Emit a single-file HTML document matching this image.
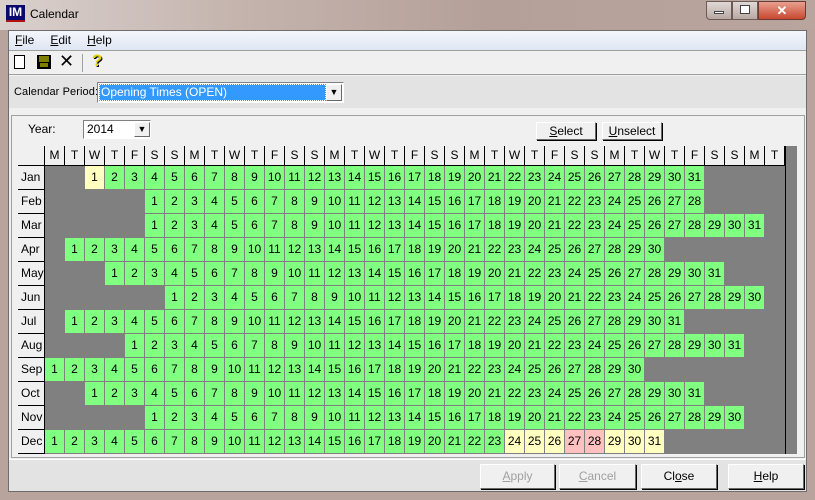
<!DOCTYPE html>
<html><head><meta charset="utf-8"><style>
*{box-sizing:border-box;margin:0;padding:0}
body{width:815px;height:500px;overflow:hidden;font-family:"Liberation Sans",sans-serif;font-size:12px;color:#000;background:#b8a49c;position:relative}
.abs{position:absolute}
.title{left:0;top:0;width:815px;height:30px;background:linear-gradient(90deg,#d9d0cd 0%,#c4b3ad 30%,#b4a098 60%,#b9a59e 100%)}
.client{left:8px;top:30px;width:799px;height:462px;background:#f0f0f0;border:1px solid #6d6d6d}
.menu{left:9px;top:31px;width:797px;height:19px;background:linear-gradient(#f4f6fb,#dfe6f3)}
.menu span{margin-left:6px;margin-right:10px;font-size:12px;line-height:19px}
.tool{left:9px;top:50px;width:797px;height:25px;background:#f0f0f0;border-top:1px solid #a0a0a0;border-bottom:1px solid #a0a0a0}
.period{left:9px;top:76px;width:797px;height:32px;background:#e3e3e3}
.panel{left:11px;top:115px;width:794px;height:343px;background:#f0f0f0;border:1px solid #a0a0a0}
.bottom{left:9px;top:459px;width:797px;height:32px;background:#e3e3e3;border-top:1px solid #fff}
.btn{position:absolute;background:#f0f0f0;border:1px solid;border-color:#fff #696969 #696969 #fff;box-shadow:1px 1px 0 #000;text-align:center;font-size:12px}
.grid{left:18px;top:146px;width:779px;height:308px;background:#808080}
.row{position:absolute;left:0;display:flex;height:24px}
.lab{width:27px;height:24px;background:#f0f0f0;border-right:1px solid #000;border-bottom:1px solid #000;padding-left:3px;line-height:23px}
.row b{display:block;width:19px;height:23px;margin-right:1px;background:#80ff80;text-align:center;line-height:23px;font-weight:normal}
.row b.y{background:#ffffc0}.row b.p{background:#ffc0c0}
.hdr{position:absolute;left:0;top:0;display:flex;height:20px}
.hdr i{display:block;width:20px;height:20px;background:#f0f0f0;border-right:1px solid #000;border-bottom:1px solid #000;font-style:normal;text-align:center;line-height:19px}
.hdr i.f{width:27px}
u{text-decoration:underline}
</style></head><body>
<div class="abs title"></div>
<div class="abs" style="left:6px;top:5px;width:19px;height:17px;background:#0a0a6e;border-bottom:2px solid #b01010;color:#fff;font-weight:bold;font-size:12px;line-height:15px;text-align:center">IM</div>
<div class="abs" style="left:30px;top:7px;font-size:12px">Calendar</div>
<div class="abs" style="left:706px;top:1px;width:26px;height:19px;border:1px solid #6b5a55;border-radius:0 0 0 4px;background:linear-gradient(#e0d8d5,#b8a8a3)"></div>
<div class="abs" style="left:732px;top:1px;width:26px;height:19px;border:1px solid #6b5a55;background:linear-gradient(#e0d8d5,#b8a8a3)"></div>
<div class="abs" style="left:758px;top:1px;width:48px;height:19px;border:1px solid #6b3a30;border-radius:0 0 4px 0;background:linear-gradient(#e8a090,#c84830);color:#fff;font-weight:bold;text-align:center;line-height:17px;font-size:13px">✕</div>
<div class="abs" style="left:714px;top:11px;width:10px;height:3px;background:#fff;border:1px solid #444"></div>
<div class="abs" style="left:740px;top:5px;width:10px;height:9px;border:1px solid #444;background:#fff"></div>
<div class="abs client"></div>
<div class="abs menu"><span><u>F</u>ile</span><span><u>E</u>dit</span><span><u>H</u>elp</span></div>
<div class="abs tool"></div>
<div class="abs" style="left:14px;top:55px;width:11px;height:14px;border:1px solid #000;background:#fff"></div>
<div class="abs" style="left:37px;top:55px;width:14px;height:14px;background:#000"><div style="margin:1px 2px;width:10px;height:6px;background:#808000"></div><div style="margin:1px 3px;width:8px;height:4px;background:#808000"></div></div>
<div class="abs" style="left:59px;top:51px;font-size:18px;line-height:20px">✕</div>
<div class="abs" style="left:82px;top:54px;width:1px;height:18px;background:#a0a0a0"></div>
<div class="abs" style="left:92px;top:51px;font-size:17px;font-weight:bold;color:#e0d000;text-shadow:1px 1px 0 #000">?</div>
<div class="abs period"></div>
<div class="abs" style="left:14px;top:86px;font-size:11px;letter-spacing:0.1px">Calendar Period:</div>
<div class="abs" style="left:97px;top:82px;width:247px;height:21px;background:#fff;border:1px solid;border-color:#808080 #fff #fff #808080"></div>
<div class="abs" style="left:100px;top:85px;width:225px;height:15px;background:#3399ff;color:#fff;line-height:15px;padding-left:1px;outline:1px dotted #c08000">Opening Times (OPEN)</div>
<div class="abs btn" style="left:326px;top:84px;width:16px;height:17px;box-shadow:none;font-size:9px;line-height:15px">▼</div>
<div class="abs panel"></div>
<div class="abs" style="left:28px;top:122px">Year:</div>
<div class="abs" style="left:83px;top:120px;width:68px;height:19px;background:#fff;border:1px solid;border-color:#808080 #fff #fff #808080;padding-left:3px;line-height:17px">2014</div>
<div class="abs btn" style="left:134px;top:122px;width:16px;height:15px;box-shadow:none;font-size:9px;line-height:13px">▼</div>
<div class="abs btn" style="left:536px;top:122px;width:60px;height:18px;line-height:16px"><u>S</u>elect</div>
<div class="abs btn" style="left:602px;top:122px;width:60px;height:18px;line-height:16px"><u>U</u>nselect</div>
<div class="abs grid">
<div class="hdr"><i class="f"></i><i>M</i><i>T</i><i>W</i><i>T</i><i>F</i><i>S</i><i>S</i><i>M</i><i>T</i><i>W</i><i>T</i><i>F</i><i>S</i><i>S</i><i>M</i><i>T</i><i>W</i><i>T</i><i>F</i><i>S</i><i>S</i><i>M</i><i>T</i><i>W</i><i>T</i><i>F</i><i>S</i><i>S</i><i>M</i><i>T</i><i>W</i><i>T</i><i>F</i><i>S</i><i>S</i><i>M</i><i>T</i></div>
<div class="abs" style="left:767px;top:0;width:1px;height:308px;background:#000"></div>
<div class="row" style="top:20px"><div class="lab">Jan</div><div style="width:40px"></div><b class="y">1</b><b>2</b><b>3</b><b>4</b><b>5</b><b>6</b><b>7</b><b>8</b><b>9</b><b>10</b><b>11</b><b>12</b><b>13</b><b>14</b><b>15</b><b>16</b><b>17</b><b>18</b><b>19</b><b>20</b><b>21</b><b>22</b><b>23</b><b>24</b><b>25</b><b>26</b><b>27</b><b>28</b><b>29</b><b>30</b><b>31</b></div>
<div class="row" style="top:44px"><div class="lab">Feb</div><div style="width:100px"></div><b>1</b><b>2</b><b>3</b><b>4</b><b>5</b><b>6</b><b>7</b><b>8</b><b>9</b><b>10</b><b>11</b><b>12</b><b>13</b><b>14</b><b>15</b><b>16</b><b>17</b><b>18</b><b>19</b><b>20</b><b>21</b><b>22</b><b>23</b><b>24</b><b>25</b><b>26</b><b>27</b><b>28</b></div>
<div class="row" style="top:68px"><div class="lab">Mar</div><div style="width:100px"></div><b>1</b><b>2</b><b>3</b><b>4</b><b>5</b><b>6</b><b>7</b><b>8</b><b>9</b><b>10</b><b>11</b><b>12</b><b>13</b><b>14</b><b>15</b><b>16</b><b>17</b><b>18</b><b>19</b><b>20</b><b>21</b><b>22</b><b>23</b><b>24</b><b>25</b><b>26</b><b>27</b><b>28</b><b>29</b><b>30</b><b>31</b></div>
<div class="row" style="top:92px"><div class="lab">Apr</div><div style="width:20px"></div><b>1</b><b>2</b><b>3</b><b>4</b><b>5</b><b>6</b><b>7</b><b>8</b><b>9</b><b>10</b><b>11</b><b>12</b><b>13</b><b>14</b><b>15</b><b>16</b><b>17</b><b>18</b><b>19</b><b>20</b><b>21</b><b>22</b><b>23</b><b>24</b><b>25</b><b>26</b><b>27</b><b>28</b><b>29</b><b>30</b></div>
<div class="row" style="top:116px"><div class="lab">May</div><div style="width:60px"></div><b>1</b><b>2</b><b>3</b><b>4</b><b>5</b><b>6</b><b>7</b><b>8</b><b>9</b><b>10</b><b>11</b><b>12</b><b>13</b><b>14</b><b>15</b><b>16</b><b>17</b><b>18</b><b>19</b><b>20</b><b>21</b><b>22</b><b>23</b><b>24</b><b>25</b><b>26</b><b>27</b><b>28</b><b>29</b><b>30</b><b>31</b></div>
<div class="row" style="top:140px"><div class="lab">Jun</div><div style="width:120px"></div><b>1</b><b>2</b><b>3</b><b>4</b><b>5</b><b>6</b><b>7</b><b>8</b><b>9</b><b>10</b><b>11</b><b>12</b><b>13</b><b>14</b><b>15</b><b>16</b><b>17</b><b>18</b><b>19</b><b>20</b><b>21</b><b>22</b><b>23</b><b>24</b><b>25</b><b>26</b><b>27</b><b>28</b><b>29</b><b>30</b></div>
<div class="row" style="top:164px"><div class="lab">Jul</div><div style="width:20px"></div><b>1</b><b>2</b><b>3</b><b>4</b><b>5</b><b>6</b><b>7</b><b>8</b><b>9</b><b>10</b><b>11</b><b>12</b><b>13</b><b>14</b><b>15</b><b>16</b><b>17</b><b>18</b><b>19</b><b>20</b><b>21</b><b>22</b><b>23</b><b>24</b><b>25</b><b>26</b><b>27</b><b>28</b><b>29</b><b>30</b><b>31</b></div>
<div class="row" style="top:188px"><div class="lab">Aug</div><div style="width:80px"></div><b>1</b><b>2</b><b>3</b><b>4</b><b>5</b><b>6</b><b>7</b><b>8</b><b>9</b><b>10</b><b>11</b><b>12</b><b>13</b><b>14</b><b>15</b><b>16</b><b>17</b><b>18</b><b>19</b><b>20</b><b>21</b><b>22</b><b>23</b><b>24</b><b>25</b><b>26</b><b>27</b><b>28</b><b>29</b><b>30</b><b>31</b></div>
<div class="row" style="top:212px"><div class="lab">Sep</div><b>1</b><b>2</b><b>3</b><b>4</b><b>5</b><b>6</b><b>7</b><b>8</b><b>9</b><b>10</b><b>11</b><b>12</b><b>13</b><b>14</b><b>15</b><b>16</b><b>17</b><b>18</b><b>19</b><b>20</b><b>21</b><b>22</b><b>23</b><b>24</b><b>25</b><b>26</b><b>27</b><b>28</b><b>29</b><b>30</b></div>
<div class="row" style="top:236px"><div class="lab">Oct</div><div style="width:40px"></div><b>1</b><b>2</b><b>3</b><b>4</b><b>5</b><b>6</b><b>7</b><b>8</b><b>9</b><b>10</b><b>11</b><b>12</b><b>13</b><b>14</b><b>15</b><b>16</b><b>17</b><b>18</b><b>19</b><b>20</b><b>21</b><b>22</b><b>23</b><b>24</b><b>25</b><b>26</b><b>27</b><b>28</b><b>29</b><b>30</b><b>31</b></div>
<div class="row" style="top:260px"><div class="lab">Nov</div><div style="width:100px"></div><b>1</b><b>2</b><b>3</b><b>4</b><b>5</b><b>6</b><b>7</b><b>8</b><b>9</b><b>10</b><b>11</b><b>12</b><b>13</b><b>14</b><b>15</b><b>16</b><b>17</b><b>18</b><b>19</b><b>20</b><b>21</b><b>22</b><b>23</b><b>24</b><b>25</b><b>26</b><b>27</b><b>28</b><b>29</b><b>30</b></div>
<div class="row" style="top:284px"><div class="lab">Dec</div><b>1</b><b>2</b><b>3</b><b>4</b><b>5</b><b>6</b><b>7</b><b>8</b><b>9</b><b>10</b><b>11</b><b>12</b><b>13</b><b>14</b><b>15</b><b>16</b><b>17</b><b>18</b><b>19</b><b>20</b><b>21</b><b>22</b><b>23</b><b class="y">24</b><b class="y">25</b><b class="y">26</b><b class="p">27</b><b class="p">28</b><b class="y">29</b><b class="y">30</b><b class="y">31</b></div>
</div>
<div class="abs bottom"></div>
<div class="abs btn" style="left:480px;top:464px;width:75px;height:25px;line-height:23px;color:#a0a0a0"><u>A</u>pply</div>
<div class="abs btn" style="left:559px;top:464px;width:77px;height:25px;line-height:23px;color:#a0a0a0"><u>C</u>ancel</div>
<div class="abs btn" style="left:641px;top:464px;width:76px;height:25px;line-height:23px">Cl<u>o</u>se</div>
<div class="abs btn" style="left:728px;top:464px;width:76px;height:25px;line-height:23px"><u>H</u>elp</div>
</body></html>
